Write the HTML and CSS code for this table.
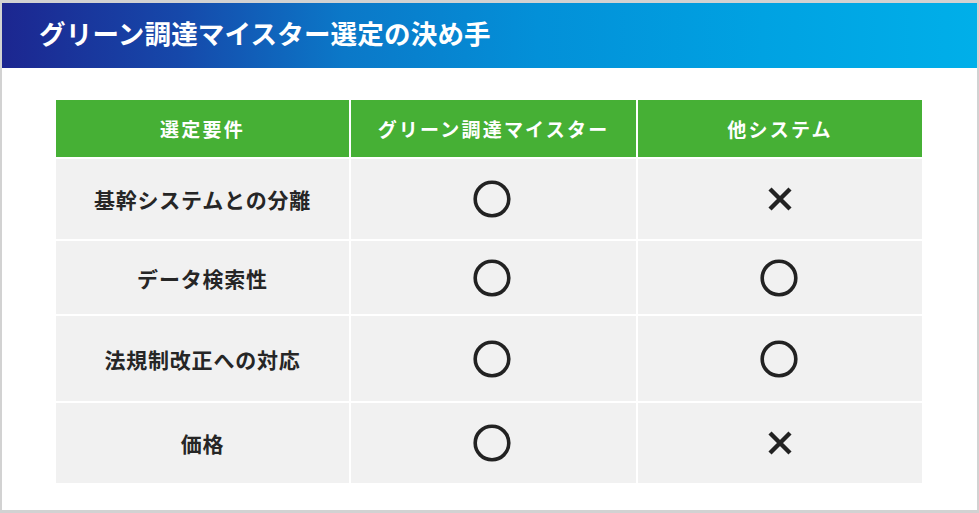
FILE: index.html
```html
<!DOCTYPE html>
<html lang="ja">
<head>
<meta charset="utf-8">
<link rel="stylesheet" href="styles.css">
</head>
<body>
<div class="frame">
  <div class="banner"><h1 class="title">グリーン調達マイスター選定の決め手</h1></div>
  <div class="table">
    <div class="th">選定要件</div>
    <div class="th">グリーン調達マイスター</div>
    <div class="th">他システム</div>

    <div class="td r1 label">基幹システムとの分離</div>
    <div class="td r1"><svg class="ok" viewBox="0 0 40 40"><circle cx="20" cy="20" r="16.8"/></svg></div>
    <div class="td r1"><svg class="ng" viewBox="0 0 28 28"><path d="M4 4L24 24M24 4L4 24"/></svg></div>

    <div class="td r2 label">データ検索性</div>
    <div class="td r2"><svg class="ok" viewBox="0 0 40 40"><circle cx="20" cy="20" r="16.8"/></svg></div>
    <div class="td r2"><svg class="ok" viewBox="0 0 40 40"><circle cx="20" cy="20" r="16.8"/></svg></div>

    <div class="td r3 label">法規制改正への対応</div>
    <div class="td r3"><svg class="ok" viewBox="0 0 40 40"><circle cx="20" cy="20" r="16.8"/></svg></div>
    <div class="td r3"><svg class="ok" viewBox="0 0 40 40"><circle cx="20" cy="20" r="16.8"/></svg></div>

    <div class="td r4 label">価格</div>
    <div class="td r4"><svg class="ok" viewBox="0 0 40 40"><circle cx="20" cy="20" r="16.8"/></svg></div>
    <div class="td r4"><svg class="ng" viewBox="0 0 28 28"><path d="M4 4L24 24M24 4L4 24"/></svg></div>
  </div>
</div>
</body>
</html>
```

FILE: styles.css
```css
html, body {
  margin: 0;
  padding: 0;
}
body {
  background: #d2d2d2;
  width: 979px;
  height: 513px;
  overflow: hidden;
  font-family: "Noto Sans CJK JP", "Noto Sans", sans-serif;
}
.frame {
  margin: 3px 2px 0 2px;
  height: 507px;
  background: #ffffff;
  display: flex;
  flex-direction: column;
}
.banner {
  height: 65px;
  background: linear-gradient(90deg, #1c2690 0%, #1648aa 18%, #0b78c8 35%, #0390d8 55%, #00a2e2 78%, #00afe9 100%);
  display: flex;
  align-items: center;
  padding-left: 37px;
}
.title {
  margin: 0;
  color: #ffffff;
  font-size: 26.5px;
  font-weight: 700;
  letter-spacing: 0.2px;
  line-height: 1;
  margin-top: -4px;
}
.table {
  margin: 32px 0 0 54px;
  width: 866px;
  display: grid;
  grid-template-columns: 293px 285px 284px;
  grid-template-rows: 57px 80px 73px 85px 80px;
  gap: 2px;
  background: #ffffff;
}
.th {
  background: #46b035;
  color: #ffffff;
  font-size: 19px;
  font-weight: 700;
  letter-spacing: 2.2px;
  display: flex;
  align-items: center;
  justify-content: center;
}
.td {
  background: #f1f1f1;
  display: flex;
  align-items: center;
  justify-content: center;
  color: #262626;
}
.label {
  font-size: 21px;
  font-weight: 700;
  letter-spacing: 0.8px;
}
.ok {
  width: 40px;
  height: 40px;
  fill: none;
  stroke: #222222;
  stroke-width: 3.6;
  margin-right: 3px;
}
.ng {
  width: 28px;
  height: 28px;
  stroke: #222222;
  stroke-width: 4.4;
  fill: none;
}
```
